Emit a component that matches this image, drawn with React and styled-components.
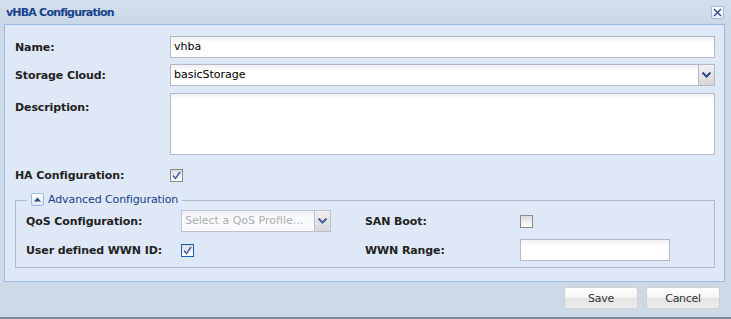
import React from "react"
import styled, { createGlobalStyle } from "styled-components"

const Global = createGlobalStyle`
  html, body { margin: 0; padding: 0; background: #ffffff; }
  * { box-sizing: border-box; }
`

const Window = styled.div`
  width: 731px;
  height: 319px;
  background: #cdd9e6;
  border-bottom: 2px solid #7f8896;
  font-family: "DejaVu Sans", Verdana, sans-serif;
  font-size: 11px;
  letter-spacing: -0.1px;
  color: #000;
  display: flex;
  flex-direction: column;
`

const Header = styled.div`
  height: 24px;
  display: flex;
  align-items: center;
  justify-content: space-between;
  padding: 0 7px 0 6px;
  background: linear-gradient(#d3dfec, #cad7e6);
`

const Title = styled.div`
  font-weight: bold;
  color: #15428b;
  letter-spacing: -0.8px;
`

const CloseBtn = styled.div`
  width: 13px;
  height: 13px;
  border: 1px solid #99bbe8;
  border-radius: 2px;
  background: linear-gradient(#ffffff, #e4ecf7);
  display: flex;
  align-items: center;
  justify-content: center;
  margin-top: 1px;
`

const Panel = styled.div`
  margin: 0 6px 0 4px;
  height: 258px;
  border: 1px solid #99bbe8;
  background: #dfe8f6;
  padding: 11px 9px 0 10px;
  display: flex;
  flex-direction: column;
`

const Row = styled.div`
  display: flex;
  align-items: ${p => (p.$top ? "flex-start" : "center")};
  margin-bottom: ${p => p.$gap || 6}px;
`

const Label = styled.div`
  width: ${p => p.$w || 155}px;
  flex: none;
  font-weight: bold;
  color: #222;
  padding-top: ${p => p.$pt || 1}px;
`

const TextBox = styled.div`
  flex: ${p => (p.$w ? "none" : "1")};
  width: ${p => (p.$w ? p.$w + "px" : "auto")};
  height: ${p => p.$h || 22}px;
  border: 1px solid #b5b8c8;
  background: linear-gradient(#f0f0f0, #ffffff 6px);
  padding: 3px 3px;
  letter-spacing: 0;
  color: ${p => (p.$muted ? "#a0a0a0" : "#000")};
  display: flex;
  align-items: flex-start;
  line-height: 14px;
  overflow: hidden;
  white-space: nowrap;
`

const Combo = styled.div`
  flex: ${p => (p.$w ? "none" : "1")};
  width: ${p => (p.$w ? p.$w + "px" : "auto")};
  height: 22px;
  display: flex;
`

const ComboText = styled(TextBox)`
  flex: 1;
  border-right: none;
  opacity: ${p => (p.$disabled ? 0.8 : 1)};
`

const Trigger = styled.div`
  width: 17px;
  height: 22px;
  border: 1px solid #b5b8c8;
  background: linear-gradient(#f2f2f2, #d6d6d6);
  display: flex;
  align-items: center;
  justify-content: center;
  opacity: ${p => (p.$disabled ? 0.85 : 1)};
`

const Check = styled.div`
  width: 13px;
  height: 13px;
  border: 1px solid ${p => (p.$blue ? "#1c5eb5" : "#8a8a8a")};
  background: linear-gradient(#dcdcdc, #ffffff);
  display: flex;
  align-items: center;
  justify-content: center;
`

const Fieldset = styled.div`
  position: relative;
  margin-top: 12px;
  height: 68px;
  border: 1px solid #b5b8c8;
  padding: 9px 10px 0 10px;
`

const Legend = styled.div`
  position: absolute;
  top: -8px;
  left: 11px;
  padding: 0 4px;
  background: #dfe8f6;
  display: flex;
  align-items: center;
  gap: 4px;
  color: #15428b;
`

const Toggle = styled.div`
  width: 13px;
  height: 13px;
  border: 1px solid #99bbe8;
  border-radius: 2px;
  background: linear-gradient(#ffffff, #dfe8f6);
  display: flex;
  align-items: center;
  justify-content: center;
`

const FieldGrid = styled.div`
  display: grid;
  grid-template-columns: 155px 184px 155px 150px;
  grid-auto-rows: 22px;
  row-gap: 7px;
  align-items: center;
`

const Cell = styled.div`
  display: flex;
  align-items: center;
`

const Footer = styled.div`
  flex: 1;
  display: flex;
  justify-content: flex-end;
  align-items: flex-start;
  gap: 8px;
  padding: 5px 11px 0 0;
`

const Button = styled.div`
  width: 74px;
  height: 22px;
  border: 1px solid #d0d0d0;
  border-radius: 3px;
  background: linear-gradient(#ffffff, #f4f4f4 50%, #e4e4e4 51%, #ececec);
  display: flex;
  align-items: center;
  justify-content: center;
  color: #333;
  letter-spacing: -0.3px;
`

const Chevron = () => (
  <svg width="9" height="6" viewBox="0 0 9 6">
    <path d="M0.5 0.5 L4.5 4.5 L8.5 0.5" fill="none" stroke="#2a4a85" strokeWidth="2" />
  </svg>
)

const Tick = () => (
  <svg width="9" height="9" viewBox="0 0 9 9">
    <path d="M1 4.5 L3.5 7.5 L8 1" fill="none" stroke="#3a63b0" strokeWidth="1.5" />
  </svg>
)

export default function App() {
  return (
    <>
      <Global />
      <Window>
        <Header>
          <Title>vHBA Configuration</Title>
          <CloseBtn>
            <svg width="9" height="9" viewBox="0 0 9 9">
              <path d="M1 1 L8 8 M8 1 L1 8" stroke="#2a4a85" strokeWidth="1.4" />
            </svg>
          </CloseBtn>
        </Header>
        <Panel>
          <Row>
            <Label>Name:</Label>
            <TextBox>vhba</TextBox>
          </Row>
          <Row $gap={7}>
            <Label>Storage Cloud:</Label>
            <Combo>
              <ComboText>basicStorage</ComboText>
              <Trigger><Chevron /></Trigger>
            </Combo>
          </Row>
          <Row $top $gap={13}>
            <Label $pt={8}>Description:</Label>
            <TextBox $h={62} />
          </Row>
          <Row>
            <Label>HA Configuration:</Label>
            <Check><Tick /></Check>
          </Row>
          <Fieldset>
            <Legend>
              <Toggle>
                <svg width="7" height="5" viewBox="0 0 7 5">
                  <path d="M0 4.5 L3.5 0.5 L7 4.5 Z" fill="#2a4a85" />
                </svg>
              </Toggle>
              Advanced Configuration
            </Legend>
            <FieldGrid>
              <Label>QoS Configuration:</Label>
              <Cell>
                <Combo $w={150}>
                  <ComboText $muted $disabled>Select a QoS Profile...</ComboText>
                  <Trigger $disabled><Chevron /></Trigger>
                </Combo>
              </Cell>
              <Label>SAN Boot:</Label>
              <Cell><Check /></Cell>
              <Label>User defined WWN ID:</Label>
              <Cell><Check $blue><Tick /></Check></Cell>
              <Label>WWN Range:</Label>
              <Cell><TextBox $w={150} /></Cell>
            </FieldGrid>
          </Fieldset>
        </Panel>
        <Footer>
          <Button>Save</Button>
          <Button>Cancel</Button>
        </Footer>
      </Window>
    </>
  )
}
